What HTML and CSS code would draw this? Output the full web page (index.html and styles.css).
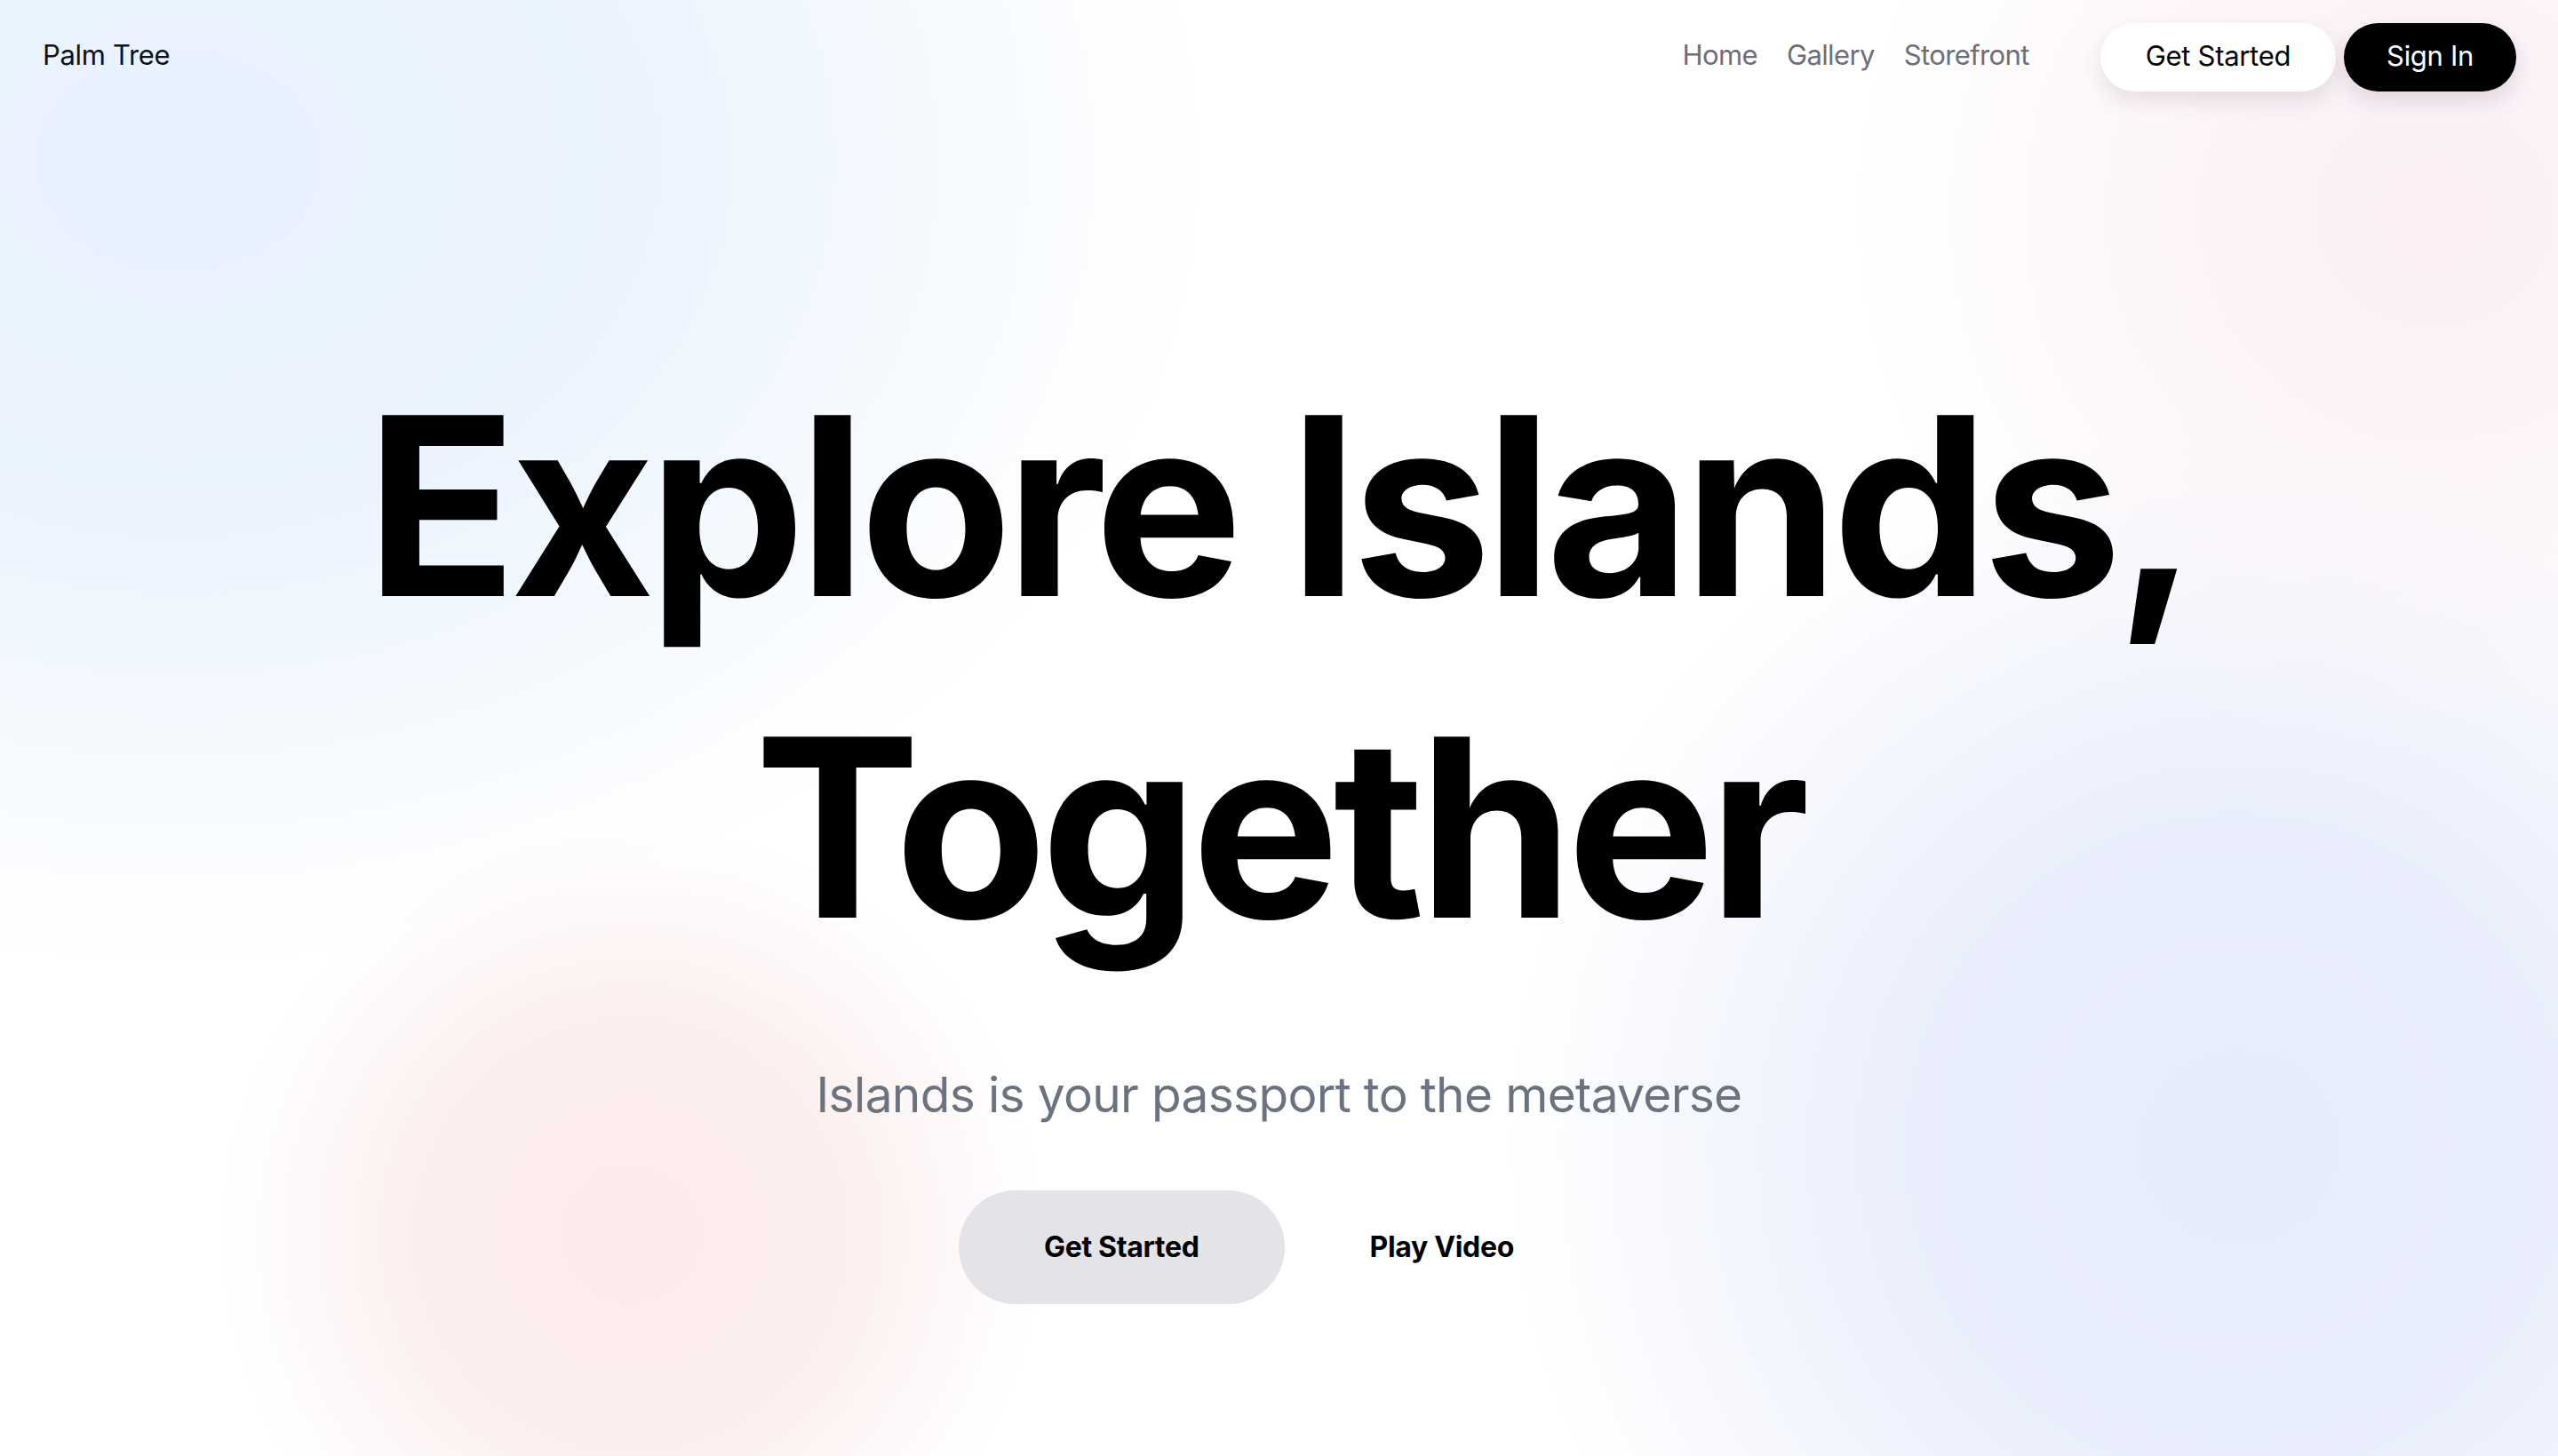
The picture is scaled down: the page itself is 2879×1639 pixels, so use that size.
FILE: index.html
```html
<!DOCTYPE html>
<html lang="en">
<head>
<meta charset="utf-8">
<title>Palm Tree</title>
<link rel="stylesheet" href="styles.css">
</head>
<body>
<div class="page">
  <header class="nav">
    <a class="brand" href="#">Palm Tree</a>
    <div class="nav-right">
      <nav class="links">
        <a href="#">Home</a>
        <a href="#">Gallery</a>
        <a href="#">Storefront</a>
      </nav>
      <div class="nav-actions">
        <a class="pill pill-light" href="#">Get Started</a>
        <a class="pill pill-dark" href="#">Sign In</a>
      </div>
    </div>
  </header>
  <main class="hero">
    <h1 class="title">Explore Islands,<br>Together</h1>
    <p class="subtitle">Islands is your passport to the metaverse</p>
    <div class="cta">
      <a class="cta-btn cta-primary" href="#">Get Started</a>
      <a class="cta-btn cta-ghost" href="#">Play Video</a>
    </div>
  </main>
</div>
</body>
</html>
```
FILE: styles.css
```css
* { box-sizing: border-box; }
html, body { margin: 0; padding: 0; }
body {
  font-family: "Inter", "Noto Sans", "Liberation Sans", sans-serif;
  color: #000;
  background: #fff;
}
a { text-decoration: none; color: inherit; }

.page {
  min-height: 100vh;
  overflow: hidden;
  background:
    radial-gradient(ellipse 1150px 900px at 200px 180px, #e8f2fe 0%, rgba(233,243,254,0.9) 45%, rgba(235,244,254,0) 100%),
    radial-gradient(ellipse 650px 620px at 2740px 240px, #fbeef5 0%, rgba(251,239,246,0.7) 40%, rgba(251,239,246,0) 100%),
    radial-gradient(circle 460px at 710px 1390px, #fcebec 0%, rgba(252,236,236,0.9) 50%, rgba(252,236,236,0) 100%),
    radial-gradient(circle 820px at 2520px 1290px, #e7ecfc 0%, rgba(232,237,252,0.9) 45%, rgba(232,237,252,0) 100%),
    #fff;
}

.nav {
  display: flex;
  align-items: center;
  justify-content: space-between;
  padding: 26px 47px 0 48px;
}
.brand {
  font-size: 31px;
  color: #111;
  letter-spacing: -0.01em;
  margin-bottom: 6px;
}
.nav-right {
  display: flex;
  align-items: center;
  gap: 80px;
}
.links {
  display: flex;
  gap: 33px;
  margin-bottom: 6px;
}
.links a {
  font-size: 31px;
  color: #6e6e76;
  letter-spacing: -0.02em;
}
.nav-actions {
  display: flex;
  gap: 9px;
}
.pill {
  height: 77px;
  display: inline-flex;
  align-items: center;
  justify-content: center;
  padding: 0 48px 5px;
  border-radius: 40px;
  font-size: 31px;
  letter-spacing: -0.01em;
}
.pill-light {
  padding-left: 51px;
  padding-right: 51px;
  background: #fff;
  color: #000;
  box-shadow: 0 10px 24px rgba(60, 40, 60, 0.12);
}
.pill-dark {
  background: #000;
  color: #fff;
  box-shadow: 0 10px 24px rgba(60, 40, 60, 0.14);
}

.hero {
  display: flex;
  flex-direction: column;
  align-items: center;
  text-align: center;
  padding-top: 286px;
}
.title {
  margin: 0;
  font-size: 280px;
  line-height: 362px;
  font-weight: 700;
  letter-spacing: -0.026em;
  color: #000;
}
.subtitle {
  margin: 86px 0 0;
  font-size: 55px;
  line-height: 67px;
  color: #6b7280;
  letter-spacing: -0.012em;
}
.cta {
  display: flex;
  margin-top: 74px;
}
.cta-btn {
  height: 128px;
  display: inline-flex;
  align-items: center;
  justify-content: center;
  padding: 0 96px 2px;
  border-radius: 64px;
  font-size: 32px;
  font-weight: 700;
  letter-spacing: -0.01em;
  color: #000;
}
.cta-primary {
  background: #e4e4e8;
}
```
